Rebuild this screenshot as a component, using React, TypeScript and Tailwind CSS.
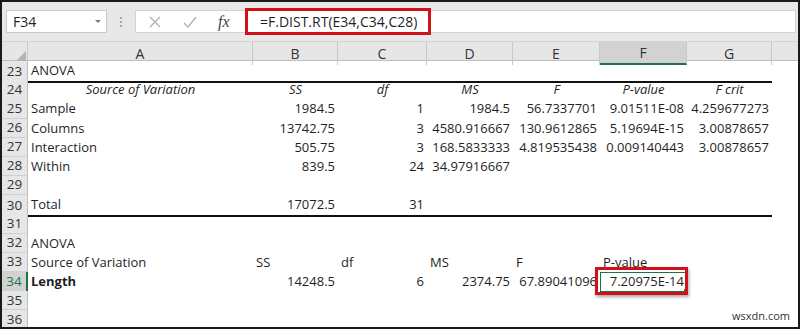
import React from "react";

type Cell = { t: string; a?: "l" | "r" | "c"; i?: boolean; b?: boolean };

const cols = ["A", "B", "C", "D", "E", "F", "G", ""];

const head = (t: string): Cell => ({ t, a: "c", i: true });
const n = (t: string): Cell => ({ t, a: "r" });
const l = (t: string): Cell => ({ t, a: "l" });

const rows: { num: number; cells: Cell[]; line?: boolean }[] = [
  { num: 23, cells: [l("ANOVA")], line: true },
  {
    num: 24,
    cells: [head("Source of Variation"), head("SS"), head("df"), head("MS"), head("F"), head("P-value"), head("F crit")],
  },
  {
    num: 25,
    cells: [l("Sample"), n("1984.5"), n("1"), n("1984.5"), n("56.7337701"), n("9.01511E-08"), n("4.259677273")],
  },
  {
    num: 26,
    cells: [l("Columns"), n("13742.75"), n("3"), n("4580.916667"), n("130.9612865"), n("5.19694E-15"), n("3.00878657")],
  },
  {
    num: 27,
    cells: [l("Interaction"), n("505.75"), n("3"), n("168.5833333"), n("4.819535438"), n("0.009140443"), n("3.00878657")],
  },
  { num: 28, cells: [l("Within"), n("839.5"), n("24"), n("34.97916667")] },
  { num: 29, cells: [] },
  { num: 30, cells: [l("Total"), n("17072.5"), n("31")], line: true },
  { num: 31, cells: [] },
  { num: 32, cells: [l("ANOVA")] },
  { num: 33, cells: [l("Source of Variation"), l("SS"), l("df"), l("MS"), l("F"), l("P-value")] },
  {
    num: 34,
    cells: [{ t: "Length", a: "l", b: true }, n("14248.5"), n("6"), n("2374.75"), n("67.89041096"), n("7.20975E-14")],
  },
  { num: 35, cells: [] },
  { num: 36, cells: [] },
];

const grid = "grid grid-cols-[26px_225px_85px_89px_86px_87px_87px_85px_1fr]";

function CellView({ c, line, sel }: { c?: Cell; line?: boolean; sel?: boolean }) {
  const align = c?.a === "r" ? "justify-end" : c?.a === "c" ? "justify-center" : "justify-start";
  return (
    <div
      className={`relative flex items-center px-[3px] whitespace-nowrap ${align} ${
        line ? "border-b-2 border-[#111]" : ""
      } ${c?.i ? "italic" : ""} ${c?.b ? "font-bold" : ""}`}
    >
      {c?.t}
      {sel && (
        <>
          <div className="absolute inset-0 border border-[#217346]" />
          <div className="absolute -right-[1px] -bottom-[1px] w-[4px] h-[4px] bg-[#217346]" />
          <div className="absolute -top-[5px] -bottom-[3px] -left-[5px] -right-[1px] border-[3px] border-[#d0101b] shadow-[1px_2px_3px_rgba(0,0,0,0.35)]" />
        </>
      )}
    </div>
  );
}

export default function App() {
  return (
    <div
      className="relative w-[800px] h-[329px] overflow-hidden border-2 border-[#1a1a1a] bg-white text-[#1f1f1f] text-[13px]"
      style={{ fontFamily: '"Open Sans", "Liberation Sans", sans-serif' }}
    >
      {/* formula bar */}
      <div className="flex items-center h-[40px] bg-[#e8e8e8] pl-[4px] pr-[2px] border-b border-[#d4d4d4]">
        <div className="flex items-center justify-between w-[101px] h-[23px] bg-white border border-[#c9c9c9] pl-[6px] pr-[5px]">
          <span className="text-[14px]">F34</span>
          <span className="w-0 h-0 border-l-[3px] border-r-[3px] border-t-[3px] border-l-transparent border-r-transparent border-t-[#777]" />
        </div>
        <div className="flex flex-col gap-[2px] mx-[13px]">
          <span className="w-[2px] h-[2px] bg-[#aaa]" />
          <span className="w-[2px] h-[2px] bg-[#aaa]" />
          <span className="w-[2px] h-[2px] bg-[#aaa]" />
        </div>
        <div className="flex items-center flex-1 h-[23px] bg-white border border-[#d2d2d2]">
          <div className="flex items-center w-[110px] pl-[12px] gap-[20px]">
            <svg width="14" height="14" viewBox="0 0 14 14">
              <path d="M2 2 L12 12 M12 2 L2 12" stroke="#b0b0b0" strokeWidth="1.3" />
            </svg>
            <svg width="16" height="14" viewBox="0 0 16 14">
              <path d="M2 8 L6 12 L14 2" stroke="#b0b0b0" strokeWidth="1.3" fill="none" />
            </svg>
            <span
              className="italic text-[16px] text-[#444]"
              style={{ fontFamily: '"Liberation Serif", serif' }}
            >
              fx
            </span>
          </div>
          <div className="flex items-center h-[27px] w-[186px] -ml-[1px] border-[3px] border-[#d0101b] pl-[12px] text-[14px]">
            =F.DIST.RT(E34,C34,C28)
          </div>
        </div>
      </div>

      {/* column headers */}
      <div className={`${grid} h-[19px] bg-[#e6e6e6] border-b border-[#bdbdbd] text-[14px] text-[#333]`}>
        <div className="flex items-end justify-end pr-[1px] pb-[2px] border-r border-[#c8c8c8]">
          <svg width="12" height="12" viewBox="0 0 12 12">
            <polygon points="12,0 12,12 0,12" fill="#b4b4b4" />
          </svg>
        </div>
        {cols.map((c, i) => (
          <div
            key={i}
            className={`flex items-center justify-center ${i < 7 ? "border-r border-[#c8c8c8]" : ""} ${
              c === "F" ? "bg-[#d2d2d2] border-b-2 border-b-[#217346]" : ""
            }`}
          >
            {c}
          </div>
        ))}
      </div>

      {/* rows */}
      {rows.map((r) => (
        <div key={r.num} className={`${grid} h-[19.2px]`}>
          <div
            className={`flex items-center justify-center text-[13.5px] leading-none border-b border-[#d0d0d0] ${
              r.num === 34
                ? "bg-[#d2d2d2] text-[#217346] border-r-2 border-r-[#217346]"
                : "bg-[#e6e6e6] text-[#333] border-r border-r-[#bdbdbd]"
            }`}
          >
            {r.num}
          </div>
          {cols.map((_, i) => (
            <CellView
              key={i}
              c={r.cells[i]}
              line={r.line && i < 7}
              sel={r.num === 34 && i === 5}
            />
          ))}
        </div>
      ))}

      <div className="absolute right-[8px] bottom-[3px] text-[11px] text-[#333]">wsxdn.com</div>
    </div>
  );
}
